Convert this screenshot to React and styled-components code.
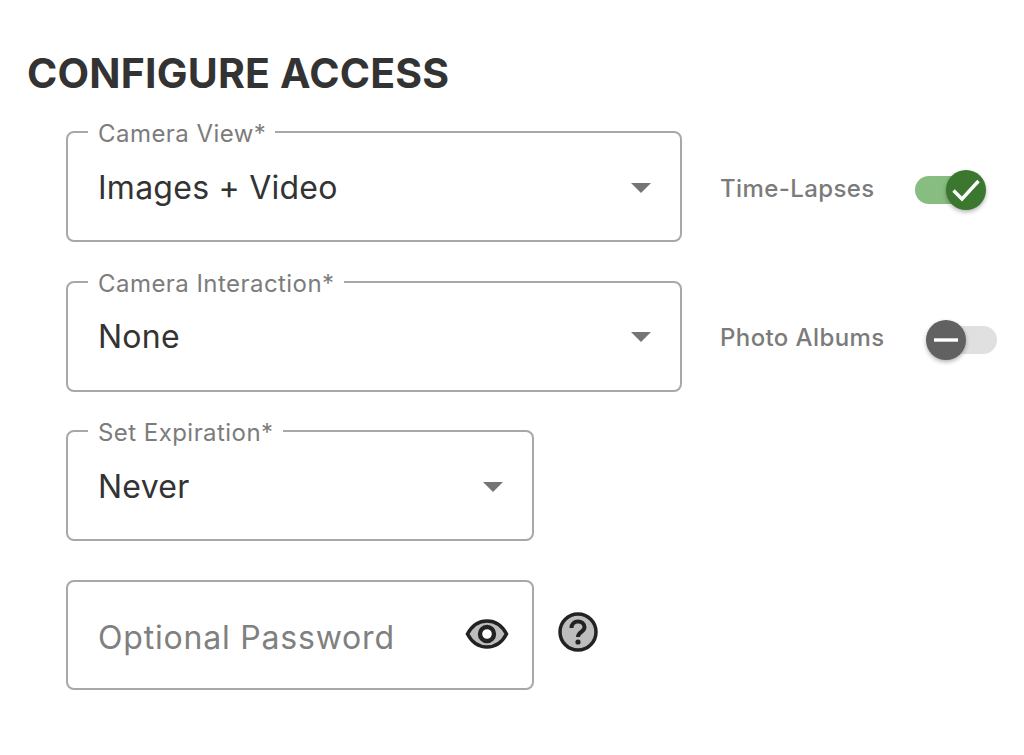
import React from "react";
import styled, { createGlobalStyle } from "styled-components";

const Global = createGlobalStyle`
  html, body { margin: 0; padding: 0; background: #fff; }
  body { font-family: "Inter", "Open Sans", sans-serif; }
`;

const Page = styled.div`
  width: 1024px;
  height: 755px;
  box-sizing: border-box;
  padding: 49px 0 0 27px;
  overflow: hidden;
`;

const Title = styled.h1`
  margin: 0 0 24px;
  font-size: 41px;
  line-height: 48px;
  font-weight: 700;
  letter-spacing: 0.2px;
  color: #333;
`;

const Rows = styled.div`
  display: flex;
  flex-direction: column;
  gap: 28.5px;
  padding-left: 39px;
`;

const Row = styled.div`
  display: flex;
  align-items: center;
  padding-top: ${(p) => p.$top || 0}px;
`;

const Outline = styled.fieldset`
  box-sizing: border-box;
  width: ${(p) => p.$width}px;
  height: 121px;
  margin: 0;
  padding: 0 29px 8px 30px;
  border: 2px solid #a8a8a8;
  border-radius: 8px;
  display: flex;
  align-items: center;
  justify-content: space-between;
`;

const Legend = styled.legend`
  margin-left: -10px;
  padding: 0 9px 0 10px;
  font-size: 24px;
  line-height: 22px;
  color: #7c7c7c;
  letter-spacing: 0.45px;
`;

const LegendText = styled.span`
  display: block;
  transform: translateY(2px);
`;

const PasswordBox = styled.div`
  box-sizing: border-box;
  width: 468px;
  height: 110px;
  padding: 6px 30px 0;
  border: 2px solid #a8a8a8;
  border-radius: 8px;
  display: flex;
  align-items: center;
  justify-content: space-between;
`;

const Value = styled.span`
  font-size: 32px;
  line-height: 40px;
  color: #333;
  letter-spacing: 0.25px;
`;

const Placeholder = styled(Value)`
  color: #808080;
  letter-spacing: 0.8px;
`;

const Caret = styled.span`
  width: 0;
  height: 0;
  border-left: 10px solid transparent;
  border-right: 10px solid transparent;
  border-top: 10px solid #757575;
`;

const Option = styled.div`
  display: flex;
  align-items: center;
  justify-content: space-between;
  margin: 13px 0 0 38px;
  width: ${(p) => p.$width}px;
`;

const OptionLabel = styled.span`
  font-size: 24px;
  font-weight: 500;
  color: #7b7b7b;
  letter-spacing: 0.4px;
`;

const Track = styled.div`
  position: relative;
  width: 70px;
  height: 28px;
  margin-top: 4px;
  border-radius: 14px;
  background: ${(p) => (p.$on ? "#88bd82" : "#e0e0e0")};
`;

const Thumb = styled.div`
  position: absolute;
  top: -6px;
  left: ${(p) => (p.$on ? "31px" : "-1px")};
  width: 40px;
  height: 40px;
  border-radius: 50%;
  background: ${(p) => (p.$on ? "#3b772f" : "#616161")};
  box-shadow: 0 2px 4px rgba(0, 0, 0, 0.3);
  display: flex;
  align-items: center;
  justify-content: center;
`;

const EyeIcon = styled.svg`
  width: 44px;
  height: 30px;
  margin: 0 -7px 7px 0;
`;

const HelpIcon = styled.svg`
  width: 40px;
  height: 40px;
  margin: 0 0 6px 24px;
`;

function Field({ label, value, width }) {
  return (
    <Outline $width={width}>
      <Legend>
        <LegendText>{label}</LegendText>
      </Legend>
      <Value>{value}</Value>
      <Caret />
    </Outline>
  );
}

function Toggle({ on }) {
  return (
    <Track $on={on}>
      <Thumb $on={on}>
        {on ? (
          <svg width="28" height="28" viewBox="0 0 28 28" fill="none">
            <path d="M1.500 14.500L10 23L26.500 5" stroke="#fff" strokeWidth="3.400" />
          </svg>
        ) : (
          <svg width="26" height="26" viewBox="0 0 26 26" fill="none">
            <path d="M1 13h24" stroke="#fff" strokeWidth="3.400" />
          </svg>
        )}
      </Thumb>
    </Track>
  );
}

export default function App() {
  return (
    <Page>
      <Global />
      <Title>CONFIGURE ACCESS</Title>
      <Rows>
        <Row>
          <Field label="Camera View*" value="Images + Video" width={616} />
          <Option $width={265}>
            <OptionLabel>Time-Lapses</OptionLabel>
            <Toggle on />
          </Option>
        </Row>
        <Row>
          <Field label="Camera Interaction*" value="None" width={616} />
          <Option $width={277}>
            <OptionLabel>Photo Albums</OptionLabel>
            <Toggle />
          </Option>
        </Row>
        <Row>
          <Field label="Set Expiration*" value="Never" width={468} />
        </Row>
        <Row $top={10}>
          <PasswordBox>
            <Placeholder>Optional Password</Placeholder>
            <EyeIcon viewBox="0 0 44 30" fill="none">
              <path
                d="M2.500 15C7 6.500 14 2 22 2S37 6.500 41.500 15C37 23.500 30 28 22 28S7 23.500 2.500 15Z"
                fill="#bdbdbd"
                stroke="#222"
                strokeWidth="3.600"
              />
              <circle cx="22" cy="15" r="7" fill="#fff" stroke="#222" strokeWidth="4.400" />
            </EyeIcon>
          </PasswordBox>
          <HelpIcon viewBox="0 0 40 40">
            <circle cx="20" cy="20" r="18" fill="#bdbdbd" stroke="#222" strokeWidth="3.500" />
            <path
              d="M13.500 16c0-4 3-6.500 6.500-6.500s6.500 2.300 6.500 5.800c0 4.500-6.500 4.700-6.500 9.700"
              fill="none"
              stroke="#222"
              strokeWidth="4"
            />
            <circle cx="20" cy="30" r="2.600" fill="#222" />
          </HelpIcon>
        </Row>
      </Rows>
    </Page>
  );
}
